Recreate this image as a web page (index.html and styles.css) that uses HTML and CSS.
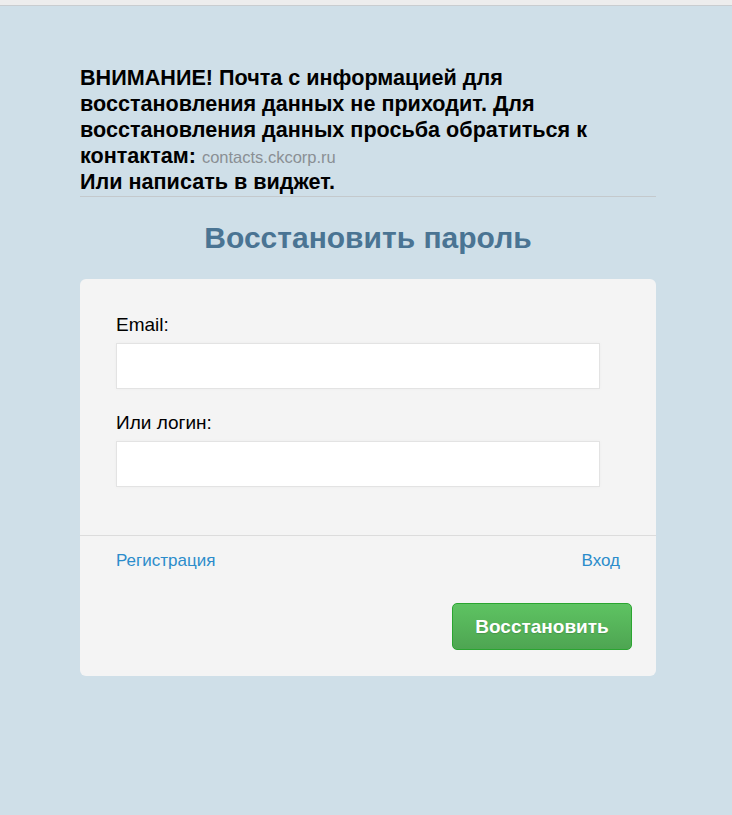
FILE: index.html
```html
<!DOCTYPE html>
<html lang="ru">
<head>
<meta charset="utf-8">
<title>Восстановить пароль</title>
<link rel="stylesheet" href="styles.css">
</head>
<body>
<div class="topbar"></div>
<main class="page">
  <div class="notice">
    ВНИМАНИЕ! Почта с информацией для восстановления данных не приходит. Для восстановления данных просьба обратиться к контактам: <a class="contact" href="#">contacts.ckcorp.ru</a><br>
    Или написать в виджет.
  </div>
  <hr class="rule">
  <h1 class="title">Восстановить пароль</h1>
  <form class="card">
    <div class="fields">
      <label class="label" for="email">Email:</label>
      <input class="input" id="email" type="text">
      <label class="label" for="login">Или логин:</label>
      <input class="input" id="login" type="text">
    </div>
    <div class="footer">
      <div class="links">
        <a class="link" href="#">Регистрация</a>
        <a class="link" href="#">Вход</a>
      </div>
      <div class="actions">
        <button class="btn" type="button">Восстановить</button>
      </div>
    </div>
  </form>
</main>
</body>
</html>
```
FILE: styles.css
```css
html, body {
  margin: 0;
  padding: 0;
}
body {
  background: #cfdfe8;
  font-family: "Liberation Sans", Arial, sans-serif;
  min-height: 815px;
}
.topbar {
  height: 5px;
  background: #ededed;
  border-bottom: 1px solid #c9cdd0;
}
.page {
  width: 576px;
  margin: 0 auto;
  padding: 59px 0 0 4px;
}
.notice {
  font-size: 21.6px;
  font-weight: bold;
  line-height: 26px;
  color: #000;
  padding-bottom: 1px;
}
.contact {
  font-size: 16.5px;
  line-height: 1;
  font-weight: normal;
  color: #8a8f94;
  text-decoration: none;
}
.rule {
  border: 0;
  border-top: 1px solid #c4c9cc;
  margin: 0;
}
.title {
  margin: 0;
  padding: 21px 0 21px;
  font-size: 30px;
  line-height: 40px;
  font-weight: bold;
  text-align: center;
  color: #4a7493;
}
.card {
  display: block;
  background: #f4f4f4;
  border-radius: 6px;
  margin: 0;
}
.fields {
  display: flex;
  flex-direction: column;
  padding: 35px 36px 48px;
  border-bottom: 1px solid #dcdcdc;
}
.label {
  font-size: 19px;
  line-height: 22px;
  color: #000;
  margin-bottom: 7px;
}
.input {
  width: 484px;
  height: 46px;
  box-sizing: border-box;
  border: 1px solid #e3e3e3;
  background: #fff;
  box-shadow: 0 0 4px rgba(0,0,0,0.03);
  margin: 0 0 23px;
  padding: 0 10px;
  font: inherit;
}
.input:last-child {
  margin-bottom: 0;
}
.footer {
  padding: 15px 24px 26px 36px;
}
.links {
  display: flex;
  justify-content: space-between;
  padding-right: 12px;
}
.link {
  font-size: 17px;
  line-height: 20px;
  color: #2b8ccb;
  text-decoration: none;
}
.actions {
  display: flex;
  justify-content: flex-end;
  margin-top: 32px;
}
.btn {
  width: 180px;
  height: 47px;
  border: 1px solid #2aa530;
  border-radius: 5px;
  background: linear-gradient(to bottom, #5ec362, #4ea552);
  color: #fff;
  font-family: "Liberation Sans", Arial, sans-serif;
  font-size: 19px;
  font-weight: bold;
  text-shadow: 0 1px 1px rgba(0,0,0,0.15);
  cursor: pointer;
}
```
